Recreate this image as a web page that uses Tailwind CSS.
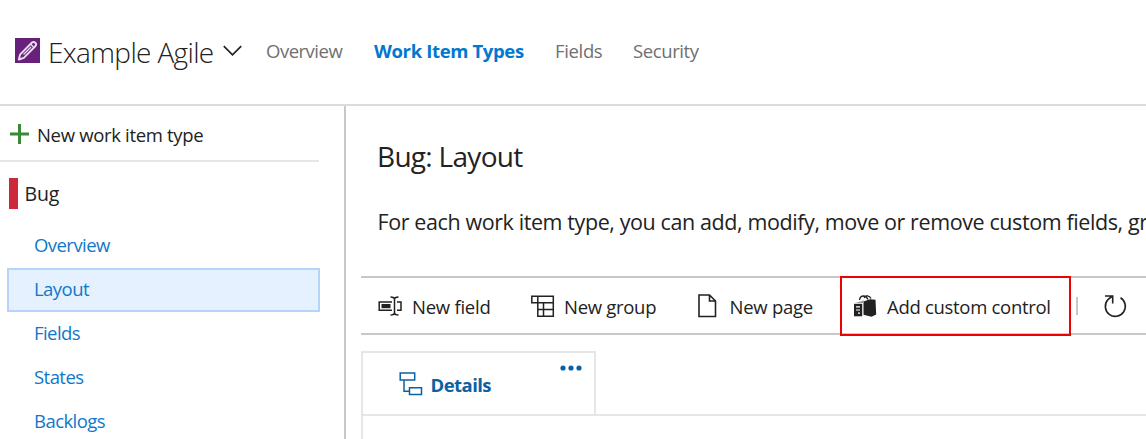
<!DOCTYPE html>
<html lang="en">
<head>
<meta charset="utf-8">
<title>Example Agile</title>
<script src="https://cdn.jsdelivr.net/npm/@tailwindcss/browser@4"></script>
</head>
<body class="h-[439px] w-[1146px] overflow-hidden bg-white font-['Open_Sans','Noto_Sans',sans-serif] text-[#222]">
<div class="flex h-full flex-col">
  <header class="flex h-[106px] shrink-0 items-center border-b-2 border-[#dcdcdc] pb-0.5 pl-[15px] whitespace-nowrap">
    <svg class="-mt-px size-[25px] shrink-0" viewBox="0 0 25 25" fill="none"><path d="M0 0h25v25H0z" fill="#68217a"/><g stroke="#e9dcee" stroke-linejoin="round"><path d="M3.800 21.500l1.400-5.200L17 4.500q1.700-1.300 3.300.2t.2 3.300L8.800 19.800z" stroke-width="1.900"/><path d="M8.500 16.500l7.500-7.500M15.500 6l3.700 3.700" stroke-width="1.300"/></g></svg>
    <h1 class="mt-px ml-2 w-[175px] shrink-0 text-[28px] leading-none font-light tracking-[-0.65px]">Example Agile</h1>
    <svg class="h-3 w-5 shrink-0" viewBox="0 0 20 12" fill="none" stroke="#222" stroke-width="1.700"><path d="M.8 1.200l8.700 8.600 8.700-8.600"/></svg>
    <nav class="flex pl-[23px] text-[18.500px] text-[#707070]">
      <a class="w-[108px] tracking-[-0.5px]">Overview</a>
      <a class="w-[181px] font-bold tracking-[-0.36px] text-[#0078d0]">Work Item Types</a>
      <a class="w-[78px] tracking-[-0.35px]">Fields</a>
      <a class="tracking-[-0.4px]">Security</a>
    </nav>
  </header>
  <div class="flex min-h-0 flex-1">
    <aside class="w-[346px] shrink-0 border-r-2 border-[#c8c8c8] pr-[25px] text-[18.500px]">
      <div class="flex h-14 items-center border-b-2 border-[#e6e6e6] pl-[10px]">
        <svg class="mt-[2px] size-5" viewBox="0 0 20 20" stroke="#388a34" stroke-width="3"><path d="M0 10h19M9.500 0v20"/></svg>
        <span class="ml-[7px] mt-[3px] tracking-[-0.33px]">New work item type</span>
      </div>
      <div class="mt-4 flex h-[31px] items-center pl-[9px]">
        <span class="h-full w-[9px] bg-[#cc293d]"></span>
        <span class="ml-[6.500px] text-[19.500px] tracking-[-0.2px]">Bug</span>
      </div>
      <nav class="mt-[15px] ml-[7px] -mr-px tracking-[-0.55px] text-[#0f78c8]">
        <a class="flex h-11 items-center pl-[27px] pb-0.5">Overview</a>
        <a class="flex h-11 items-center border-2 border-[#b5d5f8] bg-[#e5f1fe] pl-[25px] pb-0.5">Layout</a>
        <a class="flex h-11 items-center pl-[27px] pb-0.5">Fields</a>
        <a class="flex h-11 items-center pl-[27px] pb-0.5">States</a>
        <a class="flex h-11 items-center pl-[27px] pb-0.5">Backlogs</a>
      </nav>
    </aside>
    <main class="flex w-[800px] flex-col overflow-hidden whitespace-nowrap pl-[15px]">
      <h2 class="mt-[35px] ml-4 text-[28px] leading-[30px] tracking-[-0.7px]">Bug: Layout</h2>
      <p class="mt-9 ml-[16.500px] text-[21.500px] leading-[30px] tracking-[-0.4px]">For each work item type, you can add, modify, move or remove custom fields, groups</p>
      <div class="mt-[39px] flex h-[59px] shrink-0 items-center border-y-2 border-[#c8c8c8] text-[18.500px] tracking-[-0.25px]">
        <button class="ml-[17px] flex w-[153px] items-center">
          <svg class="size-6" viewBox="0 0 24 24" fill="none" stroke="#222" stroke-width="1.500"><path d="M14 8H1.200v8.200H14M19 8h4v8.200h-4M16.500 5v14M12.500 3q4 0 4 2.500 0-2.500 4-2.500M12.500 21q4 0 4-2.500 0 2.500 4 2.500"/><path d="M3.500 10h9v4.200h-9z" fill="#222" stroke="none"/></svg>
          <span class="mt-[2px] ml-[10px]">New field</span>
        </button>
        <button class="flex w-[166px] items-center">
          <svg class="size-6" viewBox="0 0 24 24" fill="none" stroke="#222" stroke-width="1.500"><path d="M.8 2.300h21.500v20H6.800V8.800H.8zM6.800 2.300v6.500h15.500M6.800 15.500h15.500M12.500 8.800v13.500"/></svg>
          <span class="mt-[2px] ml-[9px] tracking-[-0.3px]">New group</span>
        </button>
        <button class="flex w-[143px] items-center">
          <svg class="size-6" viewBox="0 0 24 24" fill="none" stroke="#222" stroke-width="1.600"><path d="M2 1h10.500l6 6v15.500H2zM12.500 1v6h6"/></svg>
          <span class="mt-[2px] ml-[8.500px]">New page</span>
        </button>
        <button class="-mt-[2px] flex h-[60px] w-[231px] shrink-0 self-start items-center border-2 border-[#f00000] pl-[11px]">
          <svg class="size-6" viewBox="0 0 24 24" fill="none"><path d="M6.500 6q.5-4 4-4 3 0 4.500 3.500M11 4q1.500-2.500 3.500-2.200 2.500.2 3.500 2.700" stroke="#222" stroke-width="1.300"/><path d="M10.500 7.500l6.500-2.300 5.500.5.700 14.800-4.700 2.300-8-2z" fill="#222"/><path d="M2 9l9-2.500V9z" fill="#999"/><path d="M1 9.800h8.200v12.500H1z" fill="#222"/><path d="M3 12.800h4M3 16h4M5 19.200h2" stroke="#fff" stroke-width="1.200"/></svg>
          <span class="mt-px ml-[10px] tracking-[-0.3px]">Add custom control</span>
        </button>
        <span class="ml-[5px] h-[18px] w-[1.500px] bg-[#c8c8c8]"></span>
        <button class="ml-[26px]"><svg class="size-6" viewBox="0 0 24 24" fill="none" stroke="#222" stroke-width="1.600"><path d="M16.500 3.800a10 10 0 1 1-12.700 2Q5.500 4 8.500 2M1 2h7.700v7.500"/></svg></button>
      </div>
      <div class="mt-4 flex h-[63px] w-[235px] shrink-0 border-2 border-b-0 border-[#e6e6e6] pl-9">
        <svg class="mt-[19px] size-6" viewBox="0 0 24 24" fill="none" stroke="#0b62a3" stroke-width="1.500"><path d="M1.200 1h14.500v7H1.200zM10.500 15.700h12v6.800h-12zM5 8v11.200h5.500"/></svg>
        <span class="ml-[7.500px] mt-[18px] text-[18.500px] leading-[27px] font-bold tracking-[-0.55px] text-[#0b62a3]">Details</span>
        <svg class="mt-3 mr-[11px] ml-auto h-[6px] w-[23px]" viewBox="0 0 23 6" fill="#0b62a3"><circle cx="3" cy="3" r="2.600"/><circle cx="11" cy="3" r="2.600"/><circle cx="19" cy="3" r="2.600"/></svg>
      </div>
      <div class="flex-1 border-t-2 border-l-2 border-[#e6e6e6]"></div>
    </main>
  </div>
</div>
</body>
</html>
